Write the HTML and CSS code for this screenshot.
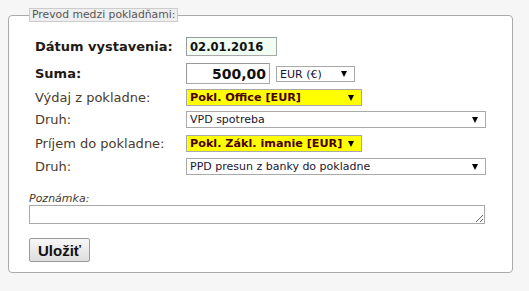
FILE: index.html
```html
<!DOCTYPE html>
<html lang="sk">
<head>
<meta charset="utf-8">
<title>Prevod medzi pokladňami</title>
<link rel="stylesheet" href="styles.css">
</head>
<body>
<form class="page">
  <fieldset class="box">
    <legend class="box-title">Prevod medzi pokladňami:</legend>
    <div class="rows">
      <div class="row row-1">
        <label class="lbl lbl-strong">Dátum vystavenia:</label>
        <input class="inp inp-date" type="text" value="02.01.2016">
      </div>
      <div class="row row-2">
        <label class="lbl lbl-strong">Suma:</label>
        <div class="ctrl-group">
          <input class="inp inp-sum" type="text" value="500,00">
          <span class="sel-wrap"><select class="sel sel-cur"><option>EUR (€)</option></select></span>
        </div>
      </div>
      <div class="row row-3">
        <label class="lbl">Výdaj z pokladne:</label>
        <span class="sel-wrap"><select class="sel sel-hl"><option>Pokl. Office [EUR]</option></select></span>
      </div>
      <div class="row row-4">
        <label class="lbl">Druh:</label>
        <span class="sel-wrap"><select class="sel sel-wide"><option>VPD spotreba</option></select></span>
      </div>
      <div class="row row-5">
        <label class="lbl">Príjem do pokladne:</label>
        <span class="sel-wrap"><select class="sel sel-hl"><option>Pokl. Zákl. imanie [EUR]</option></select></span>
      </div>
      <div class="row row-6">
        <label class="lbl">Druh:</label>
        <span class="sel-wrap"><select class="sel sel-wide"><option>PPD presun z banky do pokladne</option></select></span>
      </div>
    </div>
    <div class="note">
      <label class="note-lbl">Poznámka:</label>
      <textarea class="note-area"></textarea>
    </div>
    <button class="btn" type="button">Uložiť</button>
  </fieldset>
</form>
</body>
</html>
```

FILE: styles.css
```css
html, body {
  margin: 0;
  padding: 0;
  background: #f6f6f6;
}
body {
  padding: 8px 16px 0 8px;
  font-family: "DejaVu Sans", Verdana, sans-serif;
  color: #3b2d20;
}
.page { margin: 0; }
.box {
  margin: 0;
  background: #fff;
  border: 1px solid #aaa;
  border-radius: 4px;
  padding: 12px 20px 10px 20px;
  min-width: 0;
}
.box-title {
  padding: 0 2px;
  font-size: 10.8px;
  line-height: 12px;
  color: #555;
  background: #eee;
  border: 1px solid #ccc;
}
.rows {
  margin-left: 6px;
  display: grid;
  grid-template-rows: 25px 29px 19px 25px 23px 23px;
}
.row {
  display: grid;
  grid-template-columns: 151px auto;
  align-items: center;
  justify-items: start;
}
.lbl {
  font-size: 13px;
  color: #4a3b2c;
}
.lbl-strong {
  font-weight: bold;
  color: #1f1a14;
}
.inp {
  box-sizing: border-box;
  margin: 0;
  font-family: "DejaVu Sans", Verdana, sans-serif;
  font-weight: bold;
  color: #111;
  border: 1px solid #a9a9a9;
  border-top-color: #999;
  border-left-color: #999;
  outline: none;
}
.inp-date {
  width: 91px;
  height: 19px;
  padding: 0 3px;
  font-size: 11.6px;
  background: #f0fff2;
}
.inp-sum {
  width: 84px;
  height: 21px;
  padding: 0 3px;
  font-size: 14px;
  text-align: right;
  background: #fff;
}
.ctrl-group {
  display: flex;
  align-items: center;
  gap: 6px;
}
.sel-wrap {
  position: relative;
  display: inline-block;
}
.sel-wrap::after {
  content: "";
  position: absolute;
  right: 8px;
  top: 50%;
  margin-top: -3px;
  border-left: 3.5px solid transparent;
  border-right: 3.5px solid transparent;
  border-top: 6px solid #000;
  pointer-events: none;
}
.sel {
  -webkit-appearance: none;
  appearance: none;
  box-sizing: border-box;
  display: block;
  margin: 0;
  height: 17px;
  padding: 0 18px 0 3px;
  border: 1px solid #a9a9a9;
  border-radius: 0;
  background: #fff;
  font-family: "DejaVu Sans", Verdana, sans-serif;
  font-size: 11px;
  line-height: 15px;
  color: #1a1530;
}
.sel-cur {
  width: 79px;
  height: 16px;
}
.sel-hl {
  width: 176px;
  background: #ffff00;
  font-weight: bold;
  font-size: 11.2px;
  color: #4a0000;
}
.sel-wide {
  width: 300px;
}
.note {
  margin-top: 15px;
  display: flex;
  flex-direction: column;
}
.note-lbl {
  font-size: 11px;
  font-style: italic;
  color: #4a3b2c;
  line-height: 12px;
}
.note-area {
  box-sizing: border-box;
  width: 456px;
  height: 19px;
  margin: 0;
  border: 1px solid #a9a9a9;
  padding: 0;
  resize: both;
}
.btn {
  margin-top: 14px;
  box-sizing: border-box;
  width: 61px;
  height: 24px;
  padding: 0;
  border: 1px solid #9a9a9a;
  border-radius: 2px;
  background: linear-gradient(#f7f7f7, #dedede);
  font-family: "Liberation Sans", Arial, sans-serif;
  font-weight: bold;
  font-size: 15px;
  color: #111;
}
```
